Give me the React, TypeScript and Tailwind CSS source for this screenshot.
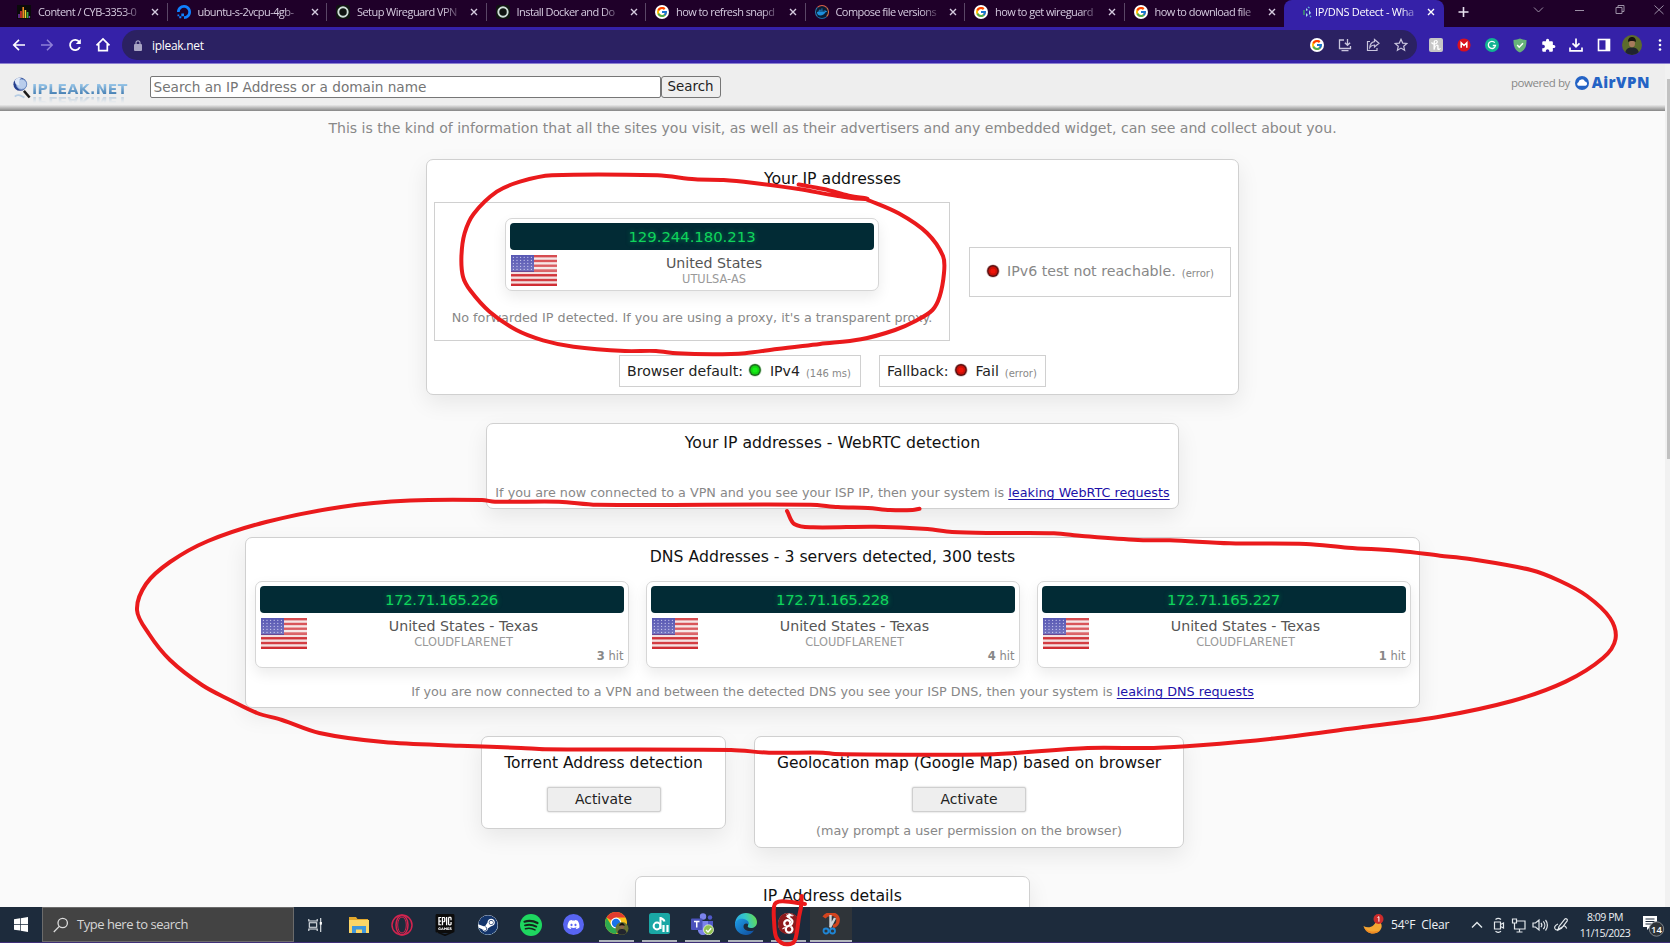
import React from "react";
import type { ReactNode } from "react";
import { FcGoogle } from "react-icons/fc";
import { FaDiscord, FaDocker, FaSteam } from "react-icons/fa";
import { MdExtension } from "react-icons/md";
import { SiDigitalocean, SiEpicgames, SiHoney, SiWireguard } from "react-icons/si";

/* ---------- browser chrome ---------- */

function BarsIcon() {
  return (
    <svg width="14" height="14" viewBox="0 0 14 14">
      <rect width="14" height="14" fill="#0a0a0a" />
      <path d="M2 13V9M12.4 13v-2" stroke="#7d3bb5" strokeWidth="1.4" />
      <path d="M4 13V6" stroke="#e0362c" strokeWidth="1.6" />
      <path d="M6.2 13V2" stroke="#f08a24" strokeWidth="1.6" />
      <path d="M8.4 13V5" stroke="#f2d32c" strokeWidth="1.6" />
      <path d="M10.6 13V7" stroke="#3fae49" strokeWidth="1.6" />
    </svg>
  );
}

function RingIcon() {
  return (
    <svg width="14" height="14" viewBox="0 0 14 14">
      <rect width="14" height="14" rx="3" fill="#101512" />
      <circle cx="7" cy="7" r="4.7" fill="none" stroke="#cfe0d8" strokeWidth="1.9" />
    </svg>
  );
}

function GoogleIcon() {
  return (
    <span className="flex size-3.5 items-center justify-center rounded-full bg-white">
      <FcGoogle size={12} />
    </span>
  );
}

function DockerIcon() {
  return (
    <span className="flex size-3.5 items-center justify-center rounded-full border border-t-[#e0604a] border-r-[#d8784a] border-b-[#1c6ea8] border-l-[#2b7fb5] bg-[#0b1c33]">
      <FaDocker size={10} color="#1d8fdc" />
    </span>
  );
}

function DetectIcon() {
  return (
    <svg width="14" height="14" viewBox="0 0 14 14">
      <path d="M6 3l2 2-2 1zM9 5l2 3-2 2zM6 8l2 2-2 2z" fill="#a9dbe8" />
      <path d="M4 5v5" stroke="#3f9a6a" strokeWidth="1.5" />
      <path d="M8 2l1.5 1M10 11l1 1" stroke="#62b6d6" strokeWidth="1.3" />
    </svg>
  );
}

const tabs: { icon: ReactNode; title: string }[] = [
  { icon: <BarsIcon />, title: "Content / CYB-3353-0" },
  { icon: <SiDigitalocean size={14} color="#0f80ff" />, title: "ubuntu-s-2vcpu-4gb-" },
  { icon: <RingIcon />, title: "Setup Wireguard VPN" },
  { icon: <RingIcon />, title: "Install Docker and Do" },
  { icon: <GoogleIcon />, title: "how to refresh snapd" },
  { icon: <DockerIcon />, title: "Compose file versions" },
  { icon: <GoogleIcon />, title: "how to get wireguard" },
  { icon: <GoogleIcon />, title: "how to download file" },
];

function CloseIcon({ className }: { className?: string }) {
  return (
    <svg width="8" height="8" viewBox="0 0 8 8" className={className}>
      <path d="M1 1l6 6M7 1L1 7" stroke="currentColor" strokeWidth="1.4" />
    </svg>
  );
}

const tabText =
  "w-[102px] whitespace-nowrap text-[11px] leading-[16px] [mask-image:linear-gradient(to_right,#000_84%,#0003)]";

function TabStrip() {
  return (
    <div className="flex h-[27px] shrink-0 items-stretch bg-[#1f0029] pl-2 font-['Open_Sans',sans-serif] text-[#d6cbe0]">
      {tabs.map((t, i) => (
        <div key={t.title} className="flex w-[159.5px] shrink-0 items-center pb-[3px]">
          <span className="ml-[9px] flex size-3.5 items-center justify-center">{t.icon}</span>
          <span className={`${tabText} ml-[7px] tracking-[-0.56px]`}>{t.title}</span>
          <CloseIcon className="ml-[11px]" />
          <span className={i === 7 ? "hidden" : "ml-auto h-[18px] w-px bg-[#5a4666]"} />
        </div>
      ))}
      <div className="flex w-[160px] shrink-0 items-center rounded-t-lg bg-[#3521a8] pb-[3px] text-white">
        <span className="ml-4 flex size-3.5 items-center justify-center">
          <DetectIcon />
        </span>
        <span className={`${tabText} ml-[1px] tracking-[-0.3px]`}>IP/DNS Detect - Wha</span>
        <CloseIcon className="ml-[10px]" />
      </div>
      <svg width="12" height="24" viewBox="0 0 12 24" className="ml-[14px]">
        <path d="M5.5 7v10M0.5 12h10" stroke="#e9e2f0" strokeWidth="1.6" />
      </svg>
      <svg width="140" height="24" viewBox="0 0 140 24" fill="none" stroke="#9b8fa5" strokeWidth="1" className="ml-[60px]">
        <path d="M4 7.500l4.500 4.500 4.500-4.500M45 10.500h9M86 7.500h6v6h-6zM88 7.500v-2h6v6h-2M124.500 5.500l9 8.500M133.500 5.500l-9 8.500" />
      </svg>
    </div>
  );
}

function Toolbar() {
  return (
    <div className="flex h-[37px] shrink-0 items-center border-b border-[#8c80d0] bg-[#3521a8] text-white">
      <div className="flex w-[122px] items-center gap-[12px] pl-[11px]">
        <svg width="16" height="16" viewBox="0 0 16 16" fill="none" stroke="#fff" strokeWidth="1.7">
          <path d="M14 8H3M8 2.800L2.800 8 8 13.200" />
        </svg>
        <svg width="16" height="16" viewBox="0 0 16 16" fill="none" stroke="#8f80d8" strokeWidth="1.500">
          <path d="M2 8h11M8 2.800L13.200 8 8 13.200" />
        </svg>
        <svg width="16" height="16" viewBox="0 0 16 16" fill="none" stroke="#fff" strokeWidth="1.800">
          <path d="M12.800 10.200A5.100 5.100 0 1 1 12.300 5" />
          <path d="M13.800 2v5H8.800z" fill="#fff" stroke="none" />
        </svg>
        <svg width="16" height="16" viewBox="0 0 16 16" fill="none" stroke="#fff" strokeWidth="1.700">
          <path d="M1.500 8.300L8 2l6.500 6.300M3.700 7v6.600h8.600V7" />
        </svg>
      </div>
      <div className="flex h-[30px] w-[1295px] items-center rounded-full bg-[#2b2162] pl-[12px]">
        <svg width="8" height="11" viewBox="0 0 8 11">
          <rect y="4" width="8" height="7" rx="1" fill="#a9a5c4" />
          <path d="M2 4V2.800a2 2 0 0 1 4 0V4" fill="none" stroke="#a9a5c4" strokeWidth="1.200" />
        </svg>
        <span className="mt-[1px] ml-[10px] font-['Open_Sans',sans-serif] text-[12px] tracking-[-0.3px]">ipleak.net</span>
        <div className="ml-auto flex items-center gap-[14px] pr-[9px] text-[#c9c5de]">
          <GoogleIcon />
          <svg width="14" height="14" viewBox="0 0 14 14" fill="none" stroke="currentColor" strokeWidth="1.300">
            <path d="M6 2H1.500v8.500h11V8M3.500 12.700h7M9.500 1v6M6.900 4.700l2.600 2.600 2.600-2.600" />
          </svg>
          <svg width="14" height="14" viewBox="0 0 14 14" fill="none" stroke="currentColor" strokeWidth="1.200">
            <path d="M4 3.500H1.500v9h9.500V10M8.500 1.500L13 5.300 8.500 9V7C6.500 7 5 7.700 3.800 9.500 4 6 6 4 8.500 3.600z" />
          </svg>
          <svg width="14" height="14" viewBox="0 0 14 14" fill="none" stroke="currentColor" strokeWidth="1.200">
            <path d="M7 1.300l1.700 3.800 4.100.4-3.100 2.700.9 4L7 10.100l-3.600 2.100.9-4L1.200 5.500l4.100-.4z" />
          </svg>
        </div>
      </div>
      <div className="flex items-center gap-[14px] pl-[12px]">
        <span className="flex size-3.5 items-center justify-center rounded-[2px] bg-[#c6c6c6]">
          <SiHoney size={10} color="#fff" />
        </span>
        <svg width="14" height="14" viewBox="0 0 14 14">
          <circle cx="7" cy="7" r="6.600" fill="#d9101e" />
          <path d="M4.200 9.700V4.700L7 7.500l2.800-2.800v5" fill="none" stroke="#fff" strokeWidth="1.500" />
        </svg>
        <svg width="14" height="14" viewBox="0 0 14 14">
          <circle cx="7" cy="7" r="7" fill="#12b392" />
          <path d="M9.800 4.700A3.600 3.600 0 1 0 10.500 7.500H7.800" fill="none" stroke="#fff" strokeWidth="1.300" />
        </svg>
        <svg width="14" height="15" viewBox="0 0 14 15">
          <path d="M7 .5c2 .9 4 1.400 6.500 1.500C13.700 8 12 12.500 7 14.500 2 12.500.3 8 .5 2 3 1.900 5 1.400 7 .5z" fill="#67b279" />
          <path d="M4.200 7l2 2.200 3.800-4" fill="none" stroke="#fff" strokeWidth="1.500" />
        </svg>
        <MdExtension size={15} className="-mr-[1px]" />
        <svg width="14" height="14" viewBox="0 0 14 14" fill="none" stroke="#fff" strokeWidth="1.700">
          <path d="M7 .5v8M3.500 5.300L7 8.800l3.500-3.500M1 9.500v3.300h12V9.500" />
        </svg>
        <svg width="14" height="14" viewBox="0 0 14 14">
          <rect x="1.500" y="1.500" width="11" height="11" fill="none" stroke="#fff" strokeWidth="1.600" />
          <rect x="8.500" y="1.500" width="4" height="11" fill="#fff" />
        </svg>
        <svg width="20" height="20" viewBox="0 0 20 20" className="-mr-[1px] -ml-[3px]">
          <clipPath id="av">
            <circle cx="10" cy="10" r="10" />
          </clipPath>
          <g clipPath="url(#av)">
            <rect width="20" height="20" fill="#5d6c2c" />
            <path d="M3 20c0-6 3-7.500 7-7.500s7 1.500 7 7.500z" fill="#20242e" />
            <ellipse cx="10" cy="8.500" rx="3" ry="3.800" fill="#a87a5c" />
            <path d="M6 7c0-4 2-5 4-5s4 1 4 5c-2-1.400-6-1.400-8 0z" fill="#17130f" />
          </g>
        </svg>
        <svg width="4" height="14" viewBox="0 0 4 14" fill="#fff" className="ml-[3px]">
          <circle cx="2" cy="2.500" r="1.300" />
          <circle cx="2" cy="7" r="1.300" />
          <circle cx="2" cy="11.500" r="1.300" />
        </svg>
      </div>
    </div>
  );
}

/* ---------- page ---------- */

function SiteHeader() {
  return (
    <div className="flex h-[47px] shrink-0 flex-col bg-[#eeeeee]">
      <div className="flex h-[41px] pl-3">
        <div className="flex w-[137.500px] items-start pt-3">
          <svg width="20" height="24" viewBox="0 0 21 24">
            <circle cx="8.500" cy="8" r="7" fill="#27408f" />
            <circle cx="10" cy="8" r="5.500" fill="#b9cdec" stroke="#6f8fc6" />
            <path d="M3 4c2-3 5-3.500 7-2.500C7 3 7 6 8 9c-3 0-5-1-5-5z" fill="#dfe9f8" />
            <path d="M3 21c3-3 6-1 10 1" stroke="#b6cde4" strokeWidth="2" fill="none" />
            <path d="M12.500 15l6 7" stroke="#1a1a1a" strokeWidth="2.600" />
          </svg>
          <span className="mt-[6px] h-[15px] bg-gradient-to-b from-[#a9d4f2] to-[#2f6ea6] bg-clip-text font-['DejaVu_Sans',sans-serif] text-[14px] leading-[15px] font-bold tracking-[0.400px] text-transparent [-webkit-box-reflect:below_-3px_linear-gradient(transparent_40%,#0006)]">
            IPLEAK.NET
          </span>
        </div>
        <div className="mt-3 flex h-[21.500px] items-stretch text-[14px]">
          <div className="flex w-[511px] items-center rounded-[2px] border border-[#767676] bg-white pl-[3px] text-[13.650px] text-[#757575]">
            Search an IP Address or a domain name
          </div>
          <button className="w-[60px] rounded-[3px] border border-[#767676] bg-[#efefef] text-[13.400px] leading-[20px] text-[#222]">
            Search
          </button>
        </div>
        <div className="mr-[15px] ml-auto flex h-[37px] items-center text-[#888]">
          <span className="font-['Open_Sans',sans-serif] text-[11.500px] tracking-[-0.450px]">powered by</span>
          <svg width="14" height="14" viewBox="0 0 14 14" className="ml-[5px]">
            <circle cx="7" cy="7" r="7" fill="#2463c5" />
            <path d="M3.500 9.800a1.900 1.900 0 0 1 0-3.600A3.400 3.400 0 0 1 10 5.500a2.200 2.200 0 0 1 .5 4.300z" fill="#fff" />
          </svg>
          <span className="ml-[3px] font-['Open_Sans',sans-serif] text-[15px] font-extrabold tracking-[0.500px] text-[#2463c5]">
            AirVPN
          </span>
        </div>
      </div>
      <div className="h-[6px] bg-gradient-to-b from-[#e9e9e9] to-[#868686]" />
    </div>
  );
}

function Flag() {
  const stripes = [0, 2, 4, 6, 8, 10, 12];
  const rows = [0, 1, 2, 3, 4];
  const cols = [0, 1, 2, 3, 4, 5];
  return (
    <svg width="46" height="31" viewBox="0 0 46 31" className="shrink-0">
      <defs>
        <linearGradient id="gloss" x1="0" y1="0" x2="0" y2="1">
          <stop offset="0" stopColor="#fff" stopOpacity="0.150" />
          <stop offset="0.500" stopColor="#fff" stopOpacity="0.280" />
          <stop offset="0.520" stopColor="#fff" stopOpacity="0" />
          <stop offset="0.800" stopColor="#fff" stopOpacity="0.100" />
          <stop offset="1" stopColor="#fff" stopOpacity="0" />
        </linearGradient>
      </defs>
      <rect width="46" height="31" fill="#f3e0e0" />
      {stripes.map((s) => (
        <rect key={s} y={(s * 31) / 13} width="46" height={31 / 13} fill="#cf2a30" />
      ))}
      <rect width="23" height="16.700" fill="#3b3ba6" />
      {rows.map((r) =>
        cols.map((c) => <circle key={`${r}-${c}`} cx={2.400 + c * 3.600} cy={2.300 + r * 3} r="0.650" fill="#c4c4ee" />)
      )}
      <rect width="46" height="31" fill="url(#gloss)" />
    </svg>
  );
}

type IpCardProps = { ip: string; place: string; net: string; hits?: number };

function IpCard({ ip, place, net, hits }: IpCardProps) {
  return (
    <div className="flex w-[374px] flex-col rounded-[7px] border border-[#d6d6d6] bg-white p-1 shadow-[0_6px_14px_rgba(0,0,0,0.080)]">
      <div className="flex h-[27px] items-center justify-center rounded-[4px] bg-[#022b35] pt-px text-[14.900px] text-[#0fd45c] [text-shadow:0_0_5px_#0fd45c88]">
        <span className={hits === undefined ? "tracking-[-0.050px]" : "tracking-[-0.400px]"}>{ip}</span>
      </div>
      <div className="flex pt-[5px] pl-px">
        <Flag />
        <div className="flex flex-1 flex-col items-center pr-[3px]">
          <span className="h-[17px] text-[14.200px] leading-[17px] text-[#555]">{place}</span>
          <span className="h-[14px] text-[11.400px] leading-[15px] text-[#999]">{net}</span>
        </div>
      </div>
      {hits !== undefined && (
        <div className="h-[13px] text-right text-[11.500px] leading-[15px] text-[#888]">
          <b>{hits}</b> hit
        </div>
      )}
    </div>
  );
}

function Panel({ title, className, children }: { title: string; className: string; children?: ReactNode }) {
  return (
    <div className={`flex shrink-0 flex-col items-center rounded-[7px] border border-[#d0d0d0] bg-white shadow-[0_8px_22px_rgba(0,0,0,0.080)] ${className}`}>
      {title && <h2 className="flex h-[36px] shrink-0 items-center pt-[2px] text-[15.700px] whitespace-nowrap text-[#111]">{title}</h2>}
      {children}
    </div>
  );
}

function Led({ color }: { color: "green" | "red" }) {
  return (
    <svg width="14" height="14" viewBox="0 0 14 14" className="mb-[2px] shrink-0">
      <circle cx="7" cy="7" r="6.600" fill={color === "green" ? "#1d7a1d55" : "#5c101055"} />
      <circle cx="7" cy="7" r="5.900" fill={color === "green" ? "#1d6a1d" : "#5c1010"} />
      <circle cx="7" cy="7" r="4.500" fill={color === "green" ? "#12d212" : "#c81008"} />
      <circle cx="7" cy="7" r="2.600" fill={color === "green" ? "#18f018" : "#f01408"} />
    </svg>
  );
}

const note = "flex items-center whitespace-nowrap text-[12.780px] text-[#888]";
const link = "text-[#1c10a8] underline underline-offset-2";

function ActivateButton() {
  return (
    <button className="h-[25px] w-[114px] shrink-0 rounded-[2px] border border-[#cfcfcf] bg-[#eeeeee] text-[13.900px] leading-[23px] text-[#222] shadow-[0_0_2px_rgba(0,0,0,0.250)]">
      Activate
    </button>
  );
}

function PageBody() {
  return (
    <div className="flex min-h-0 flex-1 flex-col items-center overflow-hidden bg-[#fafafa]">
      <p className="flex h-[36px] shrink-0 items-center text-[14.070px] whitespace-nowrap text-[#888]">
        This is the kind of information that all the sites you visit, as well as their advertisers and any embedded widget, can see and collect about you.
      </p>

      <Panel title="Your IP addresses" className="mt-3 h-[236px] w-[813px]">
        <div className="mt-[6px] flex w-full items-center justify-between px-[7px]">
          <div className="flex h-[139px] w-[516px] flex-col items-center border border-[#d0d0d0] pt-[15px]">
            <IpCard ip="129.244.180.213" place="United States" net="UTULSA-AS" />
            <div className={`${note} mt-[17px] h-5`}>
              No forwarded IP detected. If you are using a proxy, it's a transparent proxy.
            </div>
          </div>
          <div className="flex h-[50px] w-[262px] items-center border border-[#d0d0d0] pl-4 text-[14.200px] whitespace-nowrap text-[#888]">
            <Led color="red" />
            <span className="mt-px ml-[7px]">IPv6 test not reachable.</span>
            <span className="mt-1 ml-[6px] text-[10px]">(error)</span>
          </div>
        </div>
        <div className="mt-[14px] flex h-8 gap-[18px] text-[14.100px] whitespace-nowrap text-[#222]">
          <div className="flex w-[242px] items-center border border-[#d0d0d0] pl-[7px]">
            <span className="mt-[2px] mr-[5px]">Browser default:</span>
            <Led color="green" />
            <span className="mt-[2px] ml-[8px]">IPv4</span>
            <span className="mt-[5px] ml-[6px] text-[10px] text-[#888]">(146 ms)</span>
          </div>
          <div className="flex w-[167px] items-center border border-[#d0d0d0] pl-[7px]">
            <span className="mt-[2px] mr-[5px]">Fallback:</span>
            <Led color="red" />
            <span className="mt-[2px] ml-[8px]">Fail</span>
            <span className="mt-[5px] ml-[6px] text-[10px] text-[#888]">(error)</span>
          </div>
        </div>
      </Panel>

      <Panel title="Your IP addresses - WebRTC detection" className="mt-7 h-[86px] w-[693px]">
        <div className={`${note} mt-[23px] h-5`}>
          <span>
            If you are now connected to a VPN and you see your ISP IP, then your system is{" "}
            <a className={link}>leaking WebRTC requests</a>
          </span>
        </div>
      </Panel>

      <Panel title="DNS Addresses - 3 servers detected, 300 tests" className="mt-7 h-[171px] w-[1175px]">
        <div className="mt-[7px] flex h-[87px] shrink-0 gap-[17px]">
          <IpCard ip="172.71.165.226" place="United States - Texas" net="CLOUDFLARENET" hits={3} />
          <IpCard ip="172.71.165.228" place="United States - Texas" net="CLOUDFLARENET" hits={4} />
          <IpCard ip="172.71.165.227" place="United States - Texas" net="CLOUDFLARENET" hits={1} />
        </div>
        <div className={`${note} mt-[14px] h-5`}>
          <span>
            If you are now connected to a VPN and between the detected DNS you see your ISP DNS, then your system is{" "}
            <a className={link}>leaking DNS requests</a>
          </span>
        </div>
      </Panel>

      <div className="mt-7 flex shrink-0 items-start gap-[28px]">
        <Panel title="" className="h-[93px] w-[245px]">
          <h2 className="mt-[7px] flex h-[36px] items-center pt-[3px] text-[15.500px] text-[#111]">Torrent Address detection</h2>
          <div className="mt-[7px] flex">
            <ActivateButton />
          </div>
        </Panel>
        <Panel title="" className="h-[112px] w-[430px]">
          <h2 className="mt-[7px] flex h-[36px] items-center pt-[3px] text-[15.500px] text-[#111]">
            Geolocation map (Google Map) based on browser
          </h2>
          <div className="mt-[7px] flex">
            <ActivateButton />
          </div>
          <div className={`${note} mt-[9px] h-5`}>(may prompt a user permission on the browser)</div>
        </Panel>
      </div>

      <Panel title="IP Address details" className="mt-7 h-[100px] w-[395px]" />
    </div>
  );
}

/* ---------- taskbar ---------- */

function OperaIcon() {
  return (
    <svg width="22" height="24" viewBox="0 0 22 24" fill="none" stroke="#d3244f" strokeWidth="1.500">
      <circle cx="11" cy="12" r="10" />
      <ellipse cx="11" cy="12" rx="6" ry="9.800" />
      <ellipse cx="11" cy="12" rx="4.300" ry="8" strokeWidth="1" />
    </svg>
  );
}

function FolderIcon() {
  return (
    <svg width="20" height="18" viewBox="0 0 20 18">
      <path d="M0 1h7l1.500 2H19v14H0z" fill="#e2a82c" />
      <path d="M0 4h20v13H0z" fill="#fcd667" />
      <path d="M3 17V10h14v7h-4v-3.500H7V17z" fill="#3f97dc" />
    </svg>
  );
}

function SpotifyIcon() {
  return (
    <svg width="22" height="22" viewBox="0 0 22 22">
      <circle cx="11" cy="11" r="11" fill="#1ed760" />
      <g fill="none" stroke="#15251c" strokeLinecap="round">
        <path d="M4.500 7.700c4.500-1.300 9-.8 13 1.300" strokeWidth="2.200" />
        <path d="M5 11.300c4-1.100 7.800-.6 11.300 1.300" strokeWidth="1.900" />
        <path d="M5.500 14.700c3.400-.9 6.600-.5 9.500 1.200" strokeWidth="1.600" />
      </g>
    </svg>
  );
}

function ChromeIcon() {
  return (
    <svg width="24" height="24" viewBox="0 0 24 24">
      <circle cx="11" cy="11" r="11" fill="#fbc116" />
      <path d="M11 11L1.500 5.500A11 11 0 0 1 20.500 5.500H11z" fill="#e33b2e" />
      <path d="M1.500 5.500A11 11 0 0 0 11 22l4.700-8.200L11 11 6.500 13.500z" fill="#2da94f" />
      <circle cx="11" cy="11" r="5.400" fill="#fff" />
      <circle cx="11" cy="11" r="4.200" fill="#1a73e8" />
      <circle cx="17" cy="16.500" r="6.500" fill="#6a7433" />
      <path d="M12.500 21c.5-3.500 2.500-4 4.500-4s4 .5 4.500 4a6.500 6.500 0 0 1-9 0z" fill="#22252e" />
      <circle cx="17" cy="14.500" r="2.400" fill="#8f674c" />
      <path d="M14.300 14c0-4 5.400-4 5.400 0-1.500-1-4-1-5.400 0z" fill="#15110e" />
    </svg>
  );
}

function MusicIcon() {
  return (
    <svg width="21" height="21" viewBox="0 0 21 21">
      <rect width="21" height="21" rx="2.500" fill="#1aa7a5" />
      <path d="M11.500 16V4c0 2 3.500 1.500 4 4.500" fill="none" stroke="#fff" strokeWidth="2" />
      <circle cx="8" cy="13" r="3.400" fill="none" stroke="#fff" strokeWidth="2" />
      <path d="M14.500 12v7M18.500 12v7" stroke="#fff" strokeWidth="2.200" />
    </svg>
  );
}

function TeamsIcon() {
  return (
    <svg width="23" height="22" viewBox="0 0 23 22">
      <circle cx="12" cy="3.500" r="3.200" fill="#7b83eb" />
      <circle cx="19" cy="4.500" r="2.200" fill="#5059c9" />
      <path d="M14 8h8v6a4.500 4.500 0 0 1-6 4z" fill="#5059c9" />
      <path d="M7 8h10v8a5 5 0 0 1-10 2z" fill="#7b83eb" />
      <rect y="5.500" width="11.500" height="11.500" rx="1" fill="#4b53bc" />
      <path d="M3 8.500h5.500M5.750 8.500v6" stroke="#fff" strokeWidth="1.500" />
      <circle cx="17.500" cy="16.800" r="5" fill="#92c353" stroke="#e8f2dc" strokeWidth="0.800" />
      <path d="M15 17l2 2 3.200-3.800" fill="none" stroke="#fff" strokeWidth="1.400" />
    </svg>
  );
}

function EdgeIcon() {
  return (
    <svg width="22" height="22" viewBox="0 0 22 22">
      <defs>
        <linearGradient id="edgeTop" x1="0" y1="0.600" x2="1" y2="0.400">
          <stop offset="0" stopColor="#2aa8e8" />
          <stop offset="0.500" stopColor="#34c5c9" />
          <stop offset="1" stopColor="#63dc53" />
        </linearGradient>
        <linearGradient id="edgeLow" x1="0" y1="0" x2="1" y2="1">
          <stop offset="0" stopColor="#1e9de6" />
          <stop offset="1" stopColor="#0f4a9c" />
        </linearGradient>
      </defs>
      <path d="M0 12C0 4 5 0 11 0s11 4 11 9c0 4-3 6-6 6-2.500 0-4-1-3-2.500C14 10 12 8 9 8c-4 0-9 2-9 4z" fill="url(#edgeTop)" />
      <path d="M0 11c.5-4 5-6 9-5 3.500.8 5.500 3 4.500 5.500-2-2-5-1-5 2 0 3.500 4.500 5.500 10.500 4C17 20.500 14 22 11 22 5 22-.5 17.500 0 11z" fill="url(#edgeLow)" />
    </svg>
  );
}

function SnipIcon() {
  return (
    <svg width="20" height="22" viewBox="0 0 20 22" fill="none">
      <path d="M3 4.500C6-.5 16 0 17 6c.5 4-2 7-5 7.500" stroke="#d2441e" strokeWidth="3.600" />
      <path d="M9.500 2v12M14 5L9 14.500" stroke="#cfd4d8" strokeWidth="2.400" />
      <circle cx="5" cy="18" r="2.500" stroke="#1f86d6" strokeWidth="1.800" />
      <circle cx="11.500" cy="18" r="2.500" stroke="#1f86d6" strokeWidth="1.800" />
    </svg>
  );
}

const pinned: { name: string; icon: ReactNode }[] = [
  { name: "folder", icon: <FolderIcon /> },
  { name: "opera", icon: <OperaIcon /> },
  {
    name: "epic",
    icon: (
      <span className="flex h-[17px] w-[15px] items-center justify-center bg-white">
        <SiEpicgames size={22} color="#0c0c0c" className="shrink-0" />
      </span>
    ),
  },
  {
    name: "steam",
    icon: (
      <span className="flex size-[20px] items-center justify-center rounded-full bg-gradient-to-b from-[#10204a] to-[#1d84bd]">
        <FaSteam size={20} color="#14356b" className="rounded-full bg-white" />
      </span>
    ),
  },
  { name: "spotify", icon: <SpotifyIcon /> },
  {
    name: "discord",
    icon: (
      <span className="flex size-[21px] items-center justify-center rounded-full bg-[#5865f2]">
        <FaDiscord size={13} color="#fff" />
      </span>
    ),
  },
];

const running: { name: string; icon: ReactNode }[] = [
  { name: "chrome", icon: <ChromeIcon /> },
  { name: "music", icon: <MusicIcon /> },
  { name: "teams", icon: <TeamsIcon /> },
  { name: "edge", icon: <EdgeIcon /> },
  {
    name: "wireguard",
    icon: (
      <span className="flex size-[21px] items-center justify-center rounded-full bg-white">
        <SiWireguard size={21} color="#8d1a1c" />
      </span>
    ),
  },
];

function Taskbar() {
  return (
    <div className="flex h-[36px] shrink-0 border-b border-[#3f2f78] bg-[#1d2b3c] font-['Open_Sans',sans-serif] text-[#eef1f4]">
      <div className="flex w-[42px] items-center justify-center">
        <svg width="14" height="15" viewBox="0 0 14 15" fill="#fff">
          <path d="M0 2.200L6 1.300v5.800H0zM6.700 1.200L14 0v7.100H6.700zM0 7.800h6v5.800l-6-.9zM6.700 7.800H14V15l-7.300-1.200z" />
        </svg>
      </div>
      <div className="flex w-[252px] items-center border border-[#6b6b6b] bg-[#434343] pl-[10px] text-[#d6d6d6]">
        <svg width="16" height="16" viewBox="0 0 16 16" fill="none" stroke="#dcdcdc" strokeWidth="1.300">
          <circle cx="9.700" cy="6" r="4.700" />
          <path d="M6.300 9.400L.8 15" />
        </svg>
        <span className="mt-px ml-[8px] text-[13px] tracking-[-0.460px]">Type here to search</span>
      </div>
      <div className="flex w-[43px] items-center justify-center">
        <svg width="15" height="14" viewBox="0 0 15 14" fill="none" stroke="#e6eaee" strokeWidth="1.100">
          <path d="M.8 1v2h8.400V1M.8 13v-2h8.400v2M1.300 4.800h7.400v4.400H1.300zM12.700 0v14" />
          <rect x="11.700" y="4" width="2.200" height="2.600" fill="#fff" stroke="none" />
        </svg>
      </div>
      {pinned.map((p) => (
        <div key={p.name} className="flex w-[43px] shrink-0 items-center justify-center">
          {p.icon}
        </div>
      ))}
      {running.map((p) => (
        <div key={p.name} className="flex w-[43px] shrink-0 flex-col items-center">
          <div className="flex h-[33px] items-center justify-center">{p.icon}</div>
          <div className="h-[2px] w-[35px] bg-[#aeb4bb]" />
        </div>
      ))}
      <div className="flex w-[42px] shrink-0 flex-col items-center bg-[#2f3439]">
        <div className="flex h-[33px] items-center">
          <SnipIcon />
        </div>
        <div className="h-[2px] w-[42px] bg-[#b4b9be]" />
      </div>

      <div className="ml-auto flex items-center text-[12px]">
        <svg width="21" height="21" viewBox="0 0 21 21">
          <path d="M.5 12c5 3 11.500 1 13.500-7 5 3 6 8 3 11.500-4.500 5-14 4-16.500-4.500z" fill="#f6a733" />
          <path d="M.5 12c2 5 9 7 16.500 4.500-4.500 5-14 4-16.500-4.500z" fill="#ee8a23" />
          <circle cx="15.500" cy="5" r="5" fill="#cc2b2b" />
          <path d="M14.500 3.500L15.900 2.700v5" stroke="#fff" strokeWidth="1" fill="none" />
        </svg>
        <span className="ml-[7px] w-[94px] text-[12px] tracking-[-0.180px] whitespace-pre">54°F  Clear</span>
        <svg width="98" height="16" viewBox="0 0 98 16" fill="none" stroke="#e3e8ec" strokeWidth="1.200" className="-ml-[14px]">
          <path d="M1 10.500l5-5 5 5" strokeWidth="1.400" />
          <path d="M23.500 5h6v7h-6zM29.500 7.500l3-1.500v5l-3-1.500M24.500 2.500c1.500-1.300 4-1.300 5.500 0M24.500 14.300c1.500 1.200 4 1.200 5.500 0" />
          <path d="M45.500 4H54v8H43.500V8M48.500 12v3M45.500 15h6M41.500 2h4v4h-4zM43.500 6v3" />
          <path d="M62 6h2.500L68 3v10l-3.500-3H62zM70 6c1 1.200 1 3 0 4.200M72.300 4.300c2 2.200 2 5.500 0 7.700M74.500 3c2.500 3 2.500 7.500 0 10.500" />
          <path d="M87 13l1-3.500 6-7.500c1-1 3 .5 2.200 1.800L90.500 11.300 87 13zM87 7c-3 1-4.500 4-2.500 5.500 3 1.800 6-3.500 9-3.500 2 0 1 2.500 2.500 2" />
        </svg>
        <div className="ml-[9px] flex w-[54px] flex-col items-center text-[10.500px] leading-[16px]">
          <span className="tracking-[-0.450px]">8:09 PM</span>
          <span className="tracking-[-0.500px]">11/15/2023</span>
        </div>
        <svg width="24" height="24" viewBox="0 0 24 24" className="mr-[4px] ml-[10px]">
          <path d="M1 3h14v11H8l-3 3v-3H1z" fill="#fff" />
          <path d="M3.500 6h9M3.500 8.500h9M3.500 11h6" stroke="#1d2b3c" />
          <circle cx="14.500" cy="16" r="7.200" fill="#2e3338" stroke="#8b9095" strokeWidth="0.900" />
          <text x="14.500" y="19.500" textAnchor="middle" fill="#fff" fontSize="9.500" fontWeight="600" fontFamily="Open Sans, sans-serif">
            14
          </text>
        </svg>
      </div>
    </div>
  );
}

/* ---------- freehand marker strokes ---------- */

const strokes = [
  "865.7,199 898.6,213.3 927,233 943,256 944,273 939.6,296.7 932.5,310 916,320.7 895,330 861,339.3 820,344 777,349 745,353.3 713,354.3 677,353.3 656,351 625,351 573.6,346.7 543,340.3 516.4,330 489.6,311.7 470,290 463,276.7 461.4,256.7 464.6,233.3 473.6,214 496.8,191.7 520,181.7 552,175.3 657.5,175.3 695,179.3 723.6,180 752,182.7 798.6,189 837.9,196 866.4,199 848.6,195.7 823.6,189 798.6,184.5",
  "787,511 794.7,524.3 813,527.3 875,526.7 927.5,529 952,532 997,533 1054,533.3 1082,536 1138,540 1170,540.3 1230,543.3 1306,544 1348,547.7 1400,551 1440,555.7 1470,559 1531,570 1560,581 1587,596 1610,618 1615.5,639 1603,658 1565.6,681.6 1512,701 1438,717 1363,727 1278,738 1200,745.3 1153.7,748 1087.6,748 998,754 932,754.7 835,754 823,752.7 769,752.7 731,750 545,749.3 521,748 460,745.7 383.4,742 319.5,733 282,720 257,713 230,700 202,685 170,660 149,634 137,610 146,584 170,562 208,541 266,522 341,507 410,500.6 482,500 495,501.7 559,501.7 597,504.7 810.6,504.7 838,507 868,508 890,510 912.6,510 919.5,508.7",
  "801.7,896 801,906.7 799,917 796.7,933 794,942 788,944.3 781.7,943 776,936.7 774,920 774,906.7 776,902.7 783,901.3 805,904",
];

function smoothPath(points: string) {
  const p = points.split(" ").map((s) => s.split(",").map(Number));
  const segments = p.slice(0, -1).map((a, i) => {
    const before = p[Math.max(i - 1, 0)];
    const b = p[i + 1];
    const after = p[Math.min(i + 2, p.length - 1)];
    // limits each handle to a third of its own segment, so uneven spacing does not overshoot
    const handle = (from: number[], to: number[], at: number[], sign: number) => {
      const dx = to[0] - from[0];
      const dy = to[1] - from[1];
      const len = Math.hypot(dx, dy) || 1;
      const reach = (Math.hypot(b[0] - a[0], b[1] - a[1]) / 3) * sign;
      return `${(at[0] + (dx / len) * reach).toFixed(1)} ${(at[1] + (dy / len) * reach).toFixed(1)}`;
    };
    return `C${handle(before, b, a, 1)} ${handle(a, after, b, -1)} ${b[0]} ${b[1]}`;
  });
  return `M${p[0][0]} ${p[0][1]}${segments.join("")}`;
}

function Marker() {
  return (
    <svg width="1670" height="948" viewBox="0 0 1670 948" className="pointer-events-none absolute inset-0">
      {strokes.map((points) => (
        <path key={points} d={smoothPath(points)} fill="none" stroke="#ea1a1c" strokeWidth="4" strokeLinejoin="round" strokeLinecap="round" />
      ))}
    </svg>
  );
}

export default function App() {
  return (
    <div className="relative flex h-[948px] w-[1670px] flex-col overflow-hidden bg-white font-['DejaVu_Sans',sans-serif]">
      <TabStrip />
      <Toolbar />
      <div className="flex h-[843px] shrink-0">
        <div className="flex w-[1665px] flex-col">
          <SiteHeader />
          <PageBody />
        </div>
        <div className="w-[5px] bg-[#f1f1f1] pt-[15px] pl-[2px]">
          <div className="h-[380px] bg-[#c1c1c1]" />
        </div>
      </div>
      <Taskbar />
      <Marker />
    </div>
  );
}
